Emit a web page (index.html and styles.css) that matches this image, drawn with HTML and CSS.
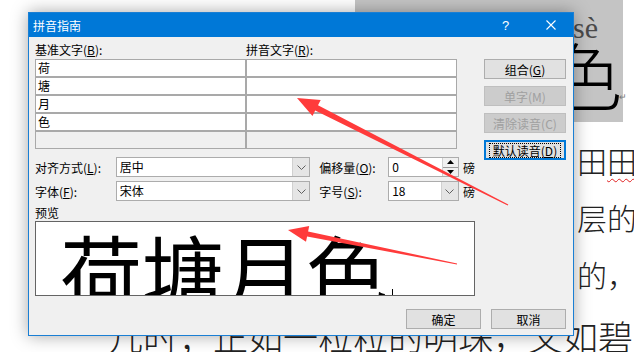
FILE: index.html
```html
<!DOCTYPE html>
<html lang="zh-CN">
<head>
  <meta charset="UTF-8">
  <title>拼音指南</title>
  <link rel="stylesheet" href="styles.css">
</head>
<body>

  <!-- 背景文档 -->
  <div class="doc">
    <div class="sel"></div>
    <div class="ruby">sè</div>
    <div class="big">色</div>
    <div class="ret">↵</div>
    <div class="lines">
      <div>田<span class="wavy">田</span></div>
      <div>层的</div>
      <div>的，</div>
    </div>
    <div class="last-line">几时；正如一粒粒的明珠，又如碧</div>
  </div>

  <!-- 对话框 -->
  <div class="dialog">
    <div class="titlebar">
      <span class="title">拼音指南</span>
      <span class="tb-btn help">?</span>
      <span class="tb-btn close">
        <svg width="10" height="10" viewBox="0 0 10 10"><path d="M0.5 0.5L9.5 9.5M9.5 0.5L0.5 9.5" stroke="#fff" stroke-width="1.1"/></svg>
      </span>
    </div>

    <div class="body">
      <div class="content">
        <div class="left">
          <div class="heads">
            <span class="head">基准文字(<u>B</u>):</span>
            <span class="head">拼音文字(<u>R</u>):</span>
          </div>
          <div class="grid">
            <div class="cell">荷</div><div class="cell"></div>
            <div class="cell">塘</div><div class="cell"></div>
            <div class="cell">月</div><div class="cell"></div>
            <div class="cell">色</div><div class="cell"></div>
            <div class="cell off"></div><div class="cell off"></div>
          </div>

          <div class="opt">
            <span class="lbl">对齐方式(<u>L</u>):</span>
            <div class="combo wide">
              <span class="val">居中</span>
              <span class="drop"><svg width="9" height="5" viewBox="0 0 9 5"><path d="M0.5 0.5L4.5 4.5L8.5 0.5" fill="none" stroke="#606060"/></svg></span>
            </div>
            <span class="lbl2">偏移量(<u>O</u>):</span>
            <div class="combo small">
              <span class="val">0</span>
              <span class="spin">
                <span class="up"><svg width="7" height="4" viewBox="0 0 7 4"><path d="M0 4L3.5 0L7 4Z" fill="#000"/></svg></span>
                <span class="down"><svg width="7" height="4" viewBox="0 0 7 4"><path d="M0 0L3.5 4L7 0Z" fill="#000"/></svg></span>
              </span>
            </div>
            <span class="unit">磅</span>
          </div>

          <div class="opt">
            <span class="lbl">字体(<u>F</u>):</span>
            <div class="combo wide">
              <span class="val">宋体</span>
              <span class="drop"><svg width="9" height="5" viewBox="0 0 9 5"><path d="M0.5 0.5L4.5 4.5L8.5 0.5" fill="none" stroke="#606060"/></svg></span>
            </div>
            <span class="lbl2">字号(<u>S</u>):</span>
            <div class="combo small">
              <span class="val">18</span>
              <span class="drop"><svg width="9" height="5" viewBox="0 0 9 5"><path d="M0.5 0.5L4.5 4.5L8.5 0.5" fill="none" stroke="#606060"/></svg></span>
            </div>
            <span class="unit">磅</span>
          </div>

          <div class="prev-label">预览</div>
          <div class="preview">荷塘月色<span class="tick"></span></div>
        </div>

        <div class="side">
          <div class="btn">组合(<u>G</u>)</div>
          <div class="btn disabled">单字(M)</div>
          <div class="btn disabled">清除读音(C)</div>
          <div class="btn default"><span class="focus">默认读音(<u>D</u>)</span></div>
        </div>
      </div>

      <div class="footer">
        <div class="btn wide-btn">确定</div>
        <div class="btn wide-btn">取消</div>
      </div>
    </div>
  </div>

  <!-- 红色箭头 -->
  <svg class="arrows" width="634" height="352" viewBox="0 0 634 352">
    <polygon fill="#ff3b3b" points="297,98 320.7,99.9 318,105.3 508.3,204.5 507.7,205.5 315.2,110.6 312.5,116"/>
    <polygon fill="#ff3b3b" points="288,230 309.2,226.1 308.1,231.5 457.1,263.5 456.9,264.5 307.1,236.4 306,241.8"/>
  </svg>

</body>
</html>
```

FILE: styles.css
```css
body {
  margin: 0;
  width: 634px;
  height: 352px;
  overflow: hidden;
  position: relative;
  background-color: #fff;
  font-family: "Noto Sans CJK SC", sans-serif;
  font-size: 12px;
  color: #000;
}

/* 背景文档 */
.doc {
  font-weight: 300;
  color: #222;
}

.sel {
  position: absolute;
  left: 355px;
  top: 0;
  width: 268px;
  height: 122px;
  background-color: #c4c4c4;
}

.ruby {
  position: absolute;
  left: 573px;
  top: 11px;
  font-family: "Liberation Serif", serif;
  font-size: 30px;
  line-height: 34px;
  color: #4a4a4a;
}

.big {
  position: absolute;
  left: 548px;
  top: 36px;
  font-size: 74px;
  line-height: 1;
  color: #000;
}

.ret {
  position: absolute;
  left: 619px;
  top: 92px;
  font-family: "DejaVu Sans", sans-serif;
  font-size: 9px;
  color: #777;
}

.lines {
  position: absolute;
  left: 577px;
  top: 132px;
  font-size: 30px;
  line-height: 57px;
  white-space: nowrap;
}

.wavy {
  text-decoration: underline wavy #e02020;
  text-decoration-thickness: 1px;
  text-underline-offset: 5px;
}

.last-line {
  position: absolute;
  left: 108px;
  top: 318px;
  font-size: 35px;
  line-height: 1;
  white-space: nowrap;
}

/* 对话框 */
.dialog {
  position: absolute;
  left: 28px;
  top: 12px;
  width: 546px;
  height: 324px;
  box-sizing: border-box;
  border: 1px solid #1a7fd4;
  background-color: #f0f0f0;
  box-shadow: 0 0 16px rgba(0, 0, 0, 0.35);
  display: flex;
  flex-direction: column;
}

.titlebar {
  height: 24px;
  background-color: #0078d7;
  color: #fff;
  display: flex;
  align-items: center;
}

.title {
  padding-left: 4px;
  flex: 1;
}

.tb-btn {
  width: 45px;
  height: 24px;
  display: flex;
  align-items: center;
  justify-content: center;
}

.help {
  font-family: "Liberation Sans", sans-serif;
  font-size: 13px;
}

.body {
  flex: 1;
  padding: 5px 7px 6px 6px;
  display: flex;
  flex-direction: column;
}

.content {
  display: flex;
  gap: 9px;
}

.left {
  width: 440px;
}

.heads {
  display: flex;
  height: 16px;
  line-height: 16px;
  margin-bottom: 1px;
}

.head {
  width: 211px;
}

.grid {
  display: grid;
  grid-template-columns: 211px 211px;
}

.cell {
  height: 18px;
  box-sizing: border-box;
  border: 1px solid #a9a9a9;
  background-color: #fff;
  padding-left: 2px;
  line-height: 16px;
}

.cell.off {
  background-color: #f0f0f0;
}

.opt {
  display: flex;
  align-items: center;
  height: 20px;
  margin-top: 8px;
}

.opt + .opt {
  margin-top: 4px;
}

.lbl {
  width: 81px;
}

.lbl2 {
  width: 69px;
  margin-left: 9px;
}

.combo {
  height: 20px;
  box-sizing: border-box;
  border: 1px solid #acacac;
  background-color: #fff;
  display: flex;
}

.combo.wide {
  width: 195px;
}

.combo.small {
  width: 71px;
}

.val {
  flex: 1;
  padding-left: 3px;
  line-height: 18px;
}

.drop {
  width: 16px;
  background-color: #e5e5e5;
  border-left: 1px solid #d0d0d0;
  display: flex;
  align-items: center;
  justify-content: center;
}

.spin {
  width: 15px;
  display: flex;
  flex-direction: column;
  border-left: 1px solid #d0d0d0;
  background-color: #f0f0f0;
}

.spin span {
  flex: 1;
  display: flex;
  align-items: center;
  justify-content: center;
}

.spin .up {
  border-bottom: 1px solid #9a9a9a;
}

.unit {
  margin-left: 4px;
}

.prev-label {
  margin-top: 4px;
  height: 16px;
  line-height: 16px;
}

.preview {
  height: 75px;
  box-sizing: border-box;
  border: 1px solid #646464;
  background-color: #fff;
  overflow: hidden;
  padding: 7px 0 0 24px;
  font-size: 82px;
  line-height: 1;
  white-space: nowrap;
}

.tick {
  display: inline-block;
  width: 1px;
  height: 6px;
  margin-left: 4px;
  margin-top: 60px;
  vertical-align: top;
  background-color: #000;
}

/* 按钮 */
.side {
  width: 84px;
  padding-top: 17px;
}

.btn {
  height: 20px;
  box-sizing: border-box;
  border: 1px solid #adadad;
  background-color: #e1e1e1;
  display: flex;
  align-items: center;
  justify-content: center;
  margin-bottom: 7px;
}

.btn.disabled {
  background-color: #cccccc;
  border-color: #bfbfbf;
  color: #a0a0a0;
}

.btn.default {
  border: 2px solid #0078d7;
}

.focus {
  border: 1px dotted #000;
  padding: 0 3px;
  line-height: 13px;
}

.footer {
  margin-top: auto;
  display: flex;
  justify-content: flex-end;
  gap: 10px;
}

.wide-btn {
  width: 75px;
  margin-bottom: 0;
}

.arrows {
  position: absolute;
  left: 0;
  top: 0;
  pointer-events: none;
}
```
